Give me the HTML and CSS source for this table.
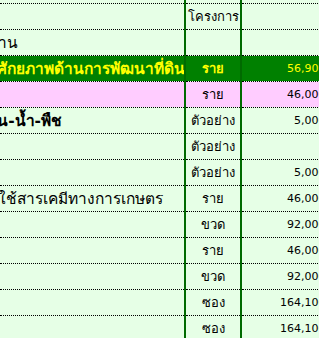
FILE: index.html
```html
<!DOCTYPE html>
<html lang="th">
<head>
<meta charset="utf-8">
<link rel="stylesheet" href="styles.css">
</head>
<body>
<div class="sheet">
  <div class="row first"><div class="c name"></div><div class="vl"></div><div class="c unit"></div><div class="vl"></div><div class="c num"></div></div>
  <div class="row"><div class="c name"></div><div class="vl"></div><div class="c unit">โครงการ</div><div class="vl"></div><div class="c num"></div></div>
  <div class="row"><div class="c name"><span class="t t2">งาน</span></div><div class="vl"></div><div class="c unit"></div><div class="vl"></div><div class="c num"></div></div>
  <div class="row hl"><div class="c name"><span class="t t3">การพัฒนาศักยภาพด้านการพัฒนาที่ดิน</span></div><div class="vl"></div><div class="c unit">ราย</div><div class="vl"></div><div class="c num">56,900.00</div></div>
  <div class="row pink"><div class="c name"></div><div class="vl"></div><div class="c unit">ราย</div><div class="vl"></div><div class="c num">46,000.00</div></div>
  <div class="row"><div class="c name"><span class="t t5 b">ดิน-น้ำ-พืช</span></div><div class="vl"></div><div class="c unit">ตัวอย่าง</div><div class="vl"></div><div class="c num">5,000.00</div></div>
  <div class="row"><div class="c name"></div><div class="vl"></div><div class="c unit">ตัวอย่าง</div><div class="vl"></div><div class="c num"></div></div>
  <div class="row"><div class="c name"></div><div class="vl"></div><div class="c unit">ตัวอย่าง</div><div class="vl"></div><div class="c num">5,000.00</div></div>
  <div class="row"><div class="c name"><span class="t t8">การใช้สารเคมีทางการเกษตร</span></div><div class="vl"></div><div class="c unit">ราย</div><div class="vl"></div><div class="c num">46,000.00</div></div>
  <div class="row"><div class="c name"></div><div class="vl"></div><div class="c unit">ขวด</div><div class="vl"></div><div class="c num">92,000.00</div></div>
  <div class="row"><div class="c name"></div><div class="vl"></div><div class="c unit">ราย</div><div class="vl"></div><div class="c num">46,000.00</div></div>
  <div class="row"><div class="c name"></div><div class="vl"></div><div class="c unit">ขวด</div><div class="vl"></div><div class="c num">92,000.00</div></div>
  <div class="row"><div class="c name"></div><div class="vl"></div><div class="c unit">ซอง</div><div class="vl"></div><div class="c num">164,100.00</div></div>
  <div class="row"><div class="c name"></div><div class="vl"></div><div class="c unit">ซอง</div><div class="vl"></div><div class="c num">164,100.00</div></div>
</div>
</body>
</html>
```
FILE: styles.css
```css
html, body {
  margin: 0;
  padding: 0;
  overflow: hidden;
  background: #e6ffe6;
}
.sheet {
  width: 400px;
  font-family: Tahoma, "DejaVu Sans", sans-serif;
  font-size: 13px;
  color: #000;
}
.row {
  display: grid;
  grid-template-columns: 184px 2px 54px 2px 158px;
  height: 26px;
}
.row.first {
  height: 4px;
}
.c {
  border-bottom: 1px dotted #000;
  background-clip: padding-box;
  display: flex;
  align-items: center;
  white-space: nowrap;
  overflow: hidden;
}
.vl {
  background: #006a00;
}
.name {
  justify-content: flex-end;
  font-size: 15.5px;
}
.unit {
  justify-content: center;
}
.num {
  justify-content: flex-end;
  padding-right: 57px;
  font-family: "DejaVu Sans", sans-serif;
  font-size: 11px;
}
.hl .c {
  background-color: #008000;
  color: #ffff00;
  font-weight: bold;
}
.hl .num {
  font-weight: normal;
}
.pink .c {
  background-color: #ffccff;
}
.t { display: block; flex: none; }
.t2 { margin-right: 166px; }
.t3 { margin-right: -1px; }
.t5 { margin-right: 122px; }
.t8 { margin-right: 21px; }
.b { font-weight: bold; }
```
